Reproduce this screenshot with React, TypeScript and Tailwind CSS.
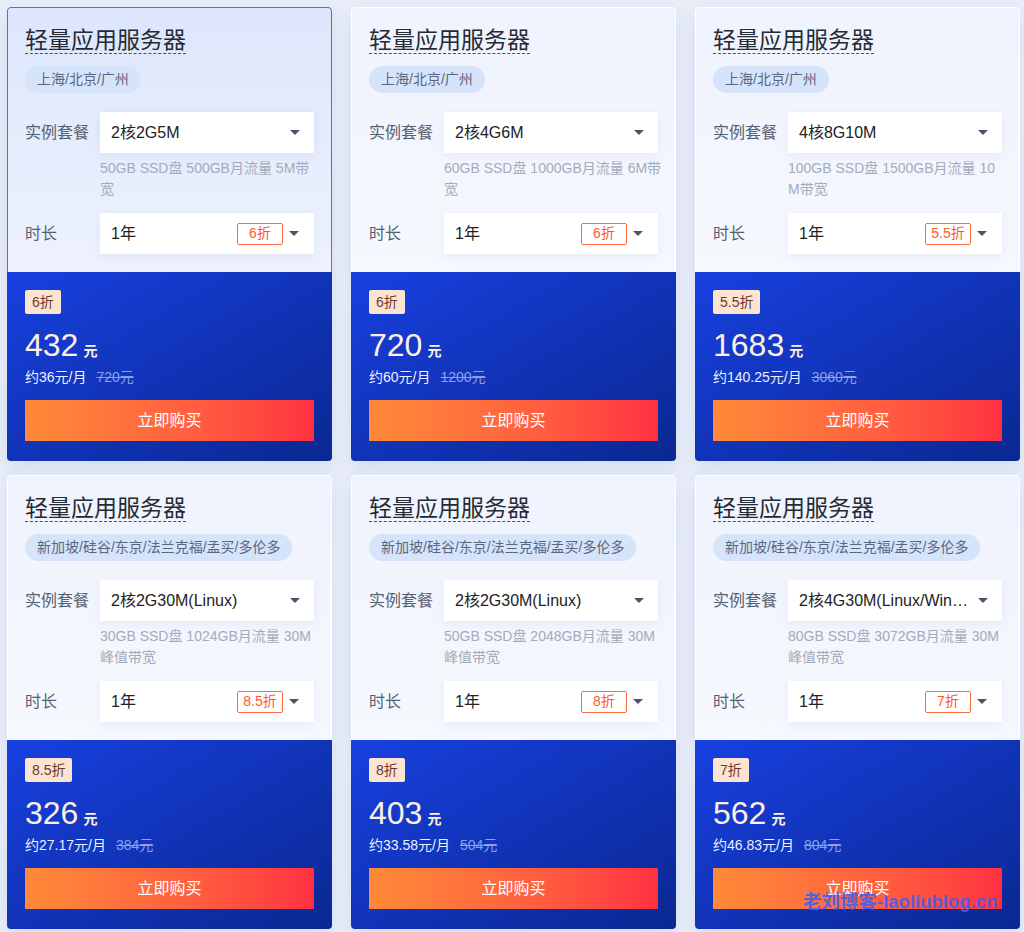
const cards = [
  {
    region: '上海/北京/广州',
    plan: '2核2G5M',
    desc: '50GB SSD盘 500GB月流量 5M带宽',
    off: '6折',
    price: '432',
    month: '约36元/月',
    orig: '720元',
    active: true,
  },
  {
    region: '上海/北京/广州',
    plan: '2核4G6M',
    desc: '60GB SSD盘 1000GB月流量 6M带宽',
    off: '6折',
    price: '720',
    month: '约60元/月',
    orig: '1200元',
  },
  {
    region: '上海/北京/广州',
    plan: '4核8G10M',
    desc: '100GB SSD盘 1500GB月流量 10M带宽',
    off: '5.5折',
    price: '1683',
    month: '约140.25元/月',
    orig: '3060元',
  },
  {
    region: '新加坡/硅谷/东京/法兰克福/孟买/多伦多',
    plan: '2核2G30M(Linux)',
    desc: '30GB SSD盘 1024GB月流量 30M峰值带宽',
    off: '8.5折',
    price: '326',
    month: '约27.17元/月',
    orig: '384元',
  },
  {
    region: '新加坡/硅谷/东京/法兰克福/孟买/多伦多',
    plan: '2核2G30M(Linux)',
    desc: '50GB SSD盘 2048GB月流量 30M峰值带宽',
    off: '8折',
    price: '403',
    month: '约33.58元/月',
    orig: '504元',
  },
  {
    region: '新加坡/硅谷/东京/法兰克福/孟买/多伦多',
    plan: '2核4G30M(Linux/Windows)',
    desc: '80GB SSD盘 3072GB月流量 30M峰值带宽',
    off: '7折',
    price: '562',
    month: '约46.83元/月',
    orig: '804元',
  },
]

type Card = (typeof cards)[number] & { active?: boolean }

const Caret = () => (
  <svg width="10" height="5" viewBox="0 0 10 5" className="shrink-0">
    <path d="M0 0h10L5 5z" fill="#4b5569" />
  </svg>
)

const PlanCard = ({ card }: { card: Card }) => (
  <div className="flex flex-col rounded-[4px] overflow-hidden shadow-[0_6px_18px_rgba(60,90,170,0.12)]">
    {/* Config area */}
    <div
      className={
        card.active
          ? 'flex flex-col px-[17px] pt-[19px] pb-[18px] rounded-t-[4px] border border-b-0 border-[#3d74f2] bg-linear-to-b from-[#dde6fb] to-[#edf2fd]'
          : 'flex flex-col px-[17px] pt-[19px] pb-[18px] rounded-t-[4px] border border-b-0 border-white bg-linear-to-b from-[#eff3fd] to-[#f6f8fe]'
      }
    >
      <div>
        <span className="inline-block text-[23px] leading-[26px] text-[#262a33] border-b border-dashed border-[#4a4f5a]">
          轻量应用服务器
        </span>
      </div>
      <div className="mt-[11px]">
        <span className="inline-block h-[27px] leading-[27px] px-[12px] rounded-full bg-[#d5e3fb] text-[14px] text-[#5d677b]">
          {card.region}
        </span>
      </div>

      <div className="mt-[19px] flex items-center">
        <div className="w-[75px] text-[16px] text-[#566073]">实例套餐</div>
        <div className="w-[214px] h-[41px] bg-white flex items-center pl-[11px] pr-[14px] gap-[10px] shadow-[0_3px_10px_rgba(60,90,170,0.08)]">
          <span className="flex-1 min-w-0 truncate text-[16px] text-[#222]">{card.plan}</span>
          <Caret />
        </div>
      </div>
      <div className="ml-[75px] mt-[5px] w-[218px] text-[14px] leading-[21px] text-[#a3abbc] break-all">
        {card.desc}
      </div>

      <div className="mt-[13px] flex items-center">
        <div className="w-[75px] text-[16px] text-[#566073]">时长</div>
        <div className="w-[214px] h-[41px] bg-white flex items-center pl-[11px] pr-[15px] shadow-[0_3px_10px_rgba(60,90,170,0.08)]">
          <span className="flex-1 text-[16px] text-[#222]">1年</span>
          <span className="w-[46px] h-[22px] mr-[6px] flex items-center justify-center border border-[#ff6a3d] rounded-[2px] text-[14px] text-[#ff5a24]">
            {card.off}
          </span>
          <Caret />
        </div>
      </div>
    </div>

    {/* Price area */}
    <div className="flex flex-col px-[18px] pt-[18px] pb-[20px] bg-linear-to-br from-[#1840e0] to-[#0a2892]">
      <div>
        <span className="inline-block h-[24px] leading-[24px] px-[7px] rounded-[2px] bg-[#fde3d2] text-[14px] text-[#6b3a2c]">
          {card.off}
        </span>
      </div>
      <div className="mt-[11px] h-[40px] leading-[40px] text-[#fdf0e2]">
        <span className="text-[32px]">{card.price}</span>
        <span className="ml-[5px] text-[14px] font-bold">元</span>
      </div>
      <div className="mt-[2px] h-[20px] leading-[20px] text-[14px] flex gap-[10px]">
        <span className="text-[#eef0ff]">{card.month}</span>
        <span className="text-[#8ea0e6] line-through">{card.orig}</span>
      </div>
      <button className="mt-[13px] h-[41px] w-full bg-linear-to-r from-[#ff8a38] to-[#ff3042] text-white text-[16px]">
        立即购买
      </button>
    </div>
  </div>
)

const App = () => {
  return (
    <div
      className="relative w-[1024px] h-[932px] overflow-hidden bg-[#e9eef8] pt-[7px] pl-[7px]"
      style={{ fontFamily: '"Liberation Sans", "Noto Sans CJK SC", sans-serif' }}
    >
      <div className="grid grid-cols-[repeat(3,325px)] gap-x-[19px] gap-y-[14px]">
        {cards.map((c, i) => (
          <PlanCard key={i} card={c} />
        ))}
      </div>

      {/* watermark */}
      <div className="absolute left-[803px] top-[888px] text-[18.5px] font-bold text-[#3f5ff0]/90">
        老刘博客-laoliublog.cn
      </div>
    </div>
  )
}

export default App
